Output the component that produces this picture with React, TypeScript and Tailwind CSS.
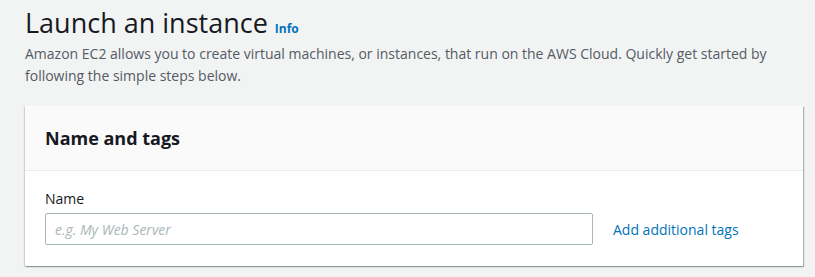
import React from "react";

export default function App() {
  return (
    <div
      className="min-h-[277px] w-full bg-[#f2f3f3] px-[25px] pt-[5px]"
      style={{ fontFamily: '"Open Sans", "Noto Sans", Arial, sans-serif' }}
    >
      <div className="flex items-baseline gap-[7px]">
        <h1 className="text-[27px] leading-[36px] font-normal text-[#16191f]">Launch an instance</h1>
        <a className="text-[12px] font-bold text-[#0073bb]">Info</a>
      </div>
      <p className="mt-[2px] text-[14px] leading-[22px] text-[#545b64]">
        Amazon EC2 allows you to create virtual machines, or instances, that run on the AWS Cloud. Quickly get started by following the simple steps below.
      </p>
      <div className="mt-[19px] w-[778px] bg-white shadow-[1px_1px_1px_0_rgba(0,28,36,0.3),-1px_1px_1px_0_rgba(0,28,36,0.15)]">
        <div className="flex h-[65px] items-center border-b border-[#eaeded] bg-[#fafafa] px-[20px]">
          <h2 className="text-[18px] font-bold text-[#16191f]">Name and tags</h2>
        </div>
        <div className="px-[20px] pt-[17px] pb-[21px]">
          <div className="text-[14px] leading-[22px] text-[#16191f]">Name</div>
          <div className="mt-[3px] flex items-center gap-[20px]">
            <input
              className="h-[32px] w-[548px] rounded-[2px] border border-[#aab7b8] px-[9px] text-[14px] italic placeholder:text-[#aab7b8] outline-none"
              placeholder="e.g. My Web Server"
            />
            <a className="text-[14px] text-[#0073bb]">Add additional tags</a>
          </div>
        </div>
      </div>
    </div>
  );
}
